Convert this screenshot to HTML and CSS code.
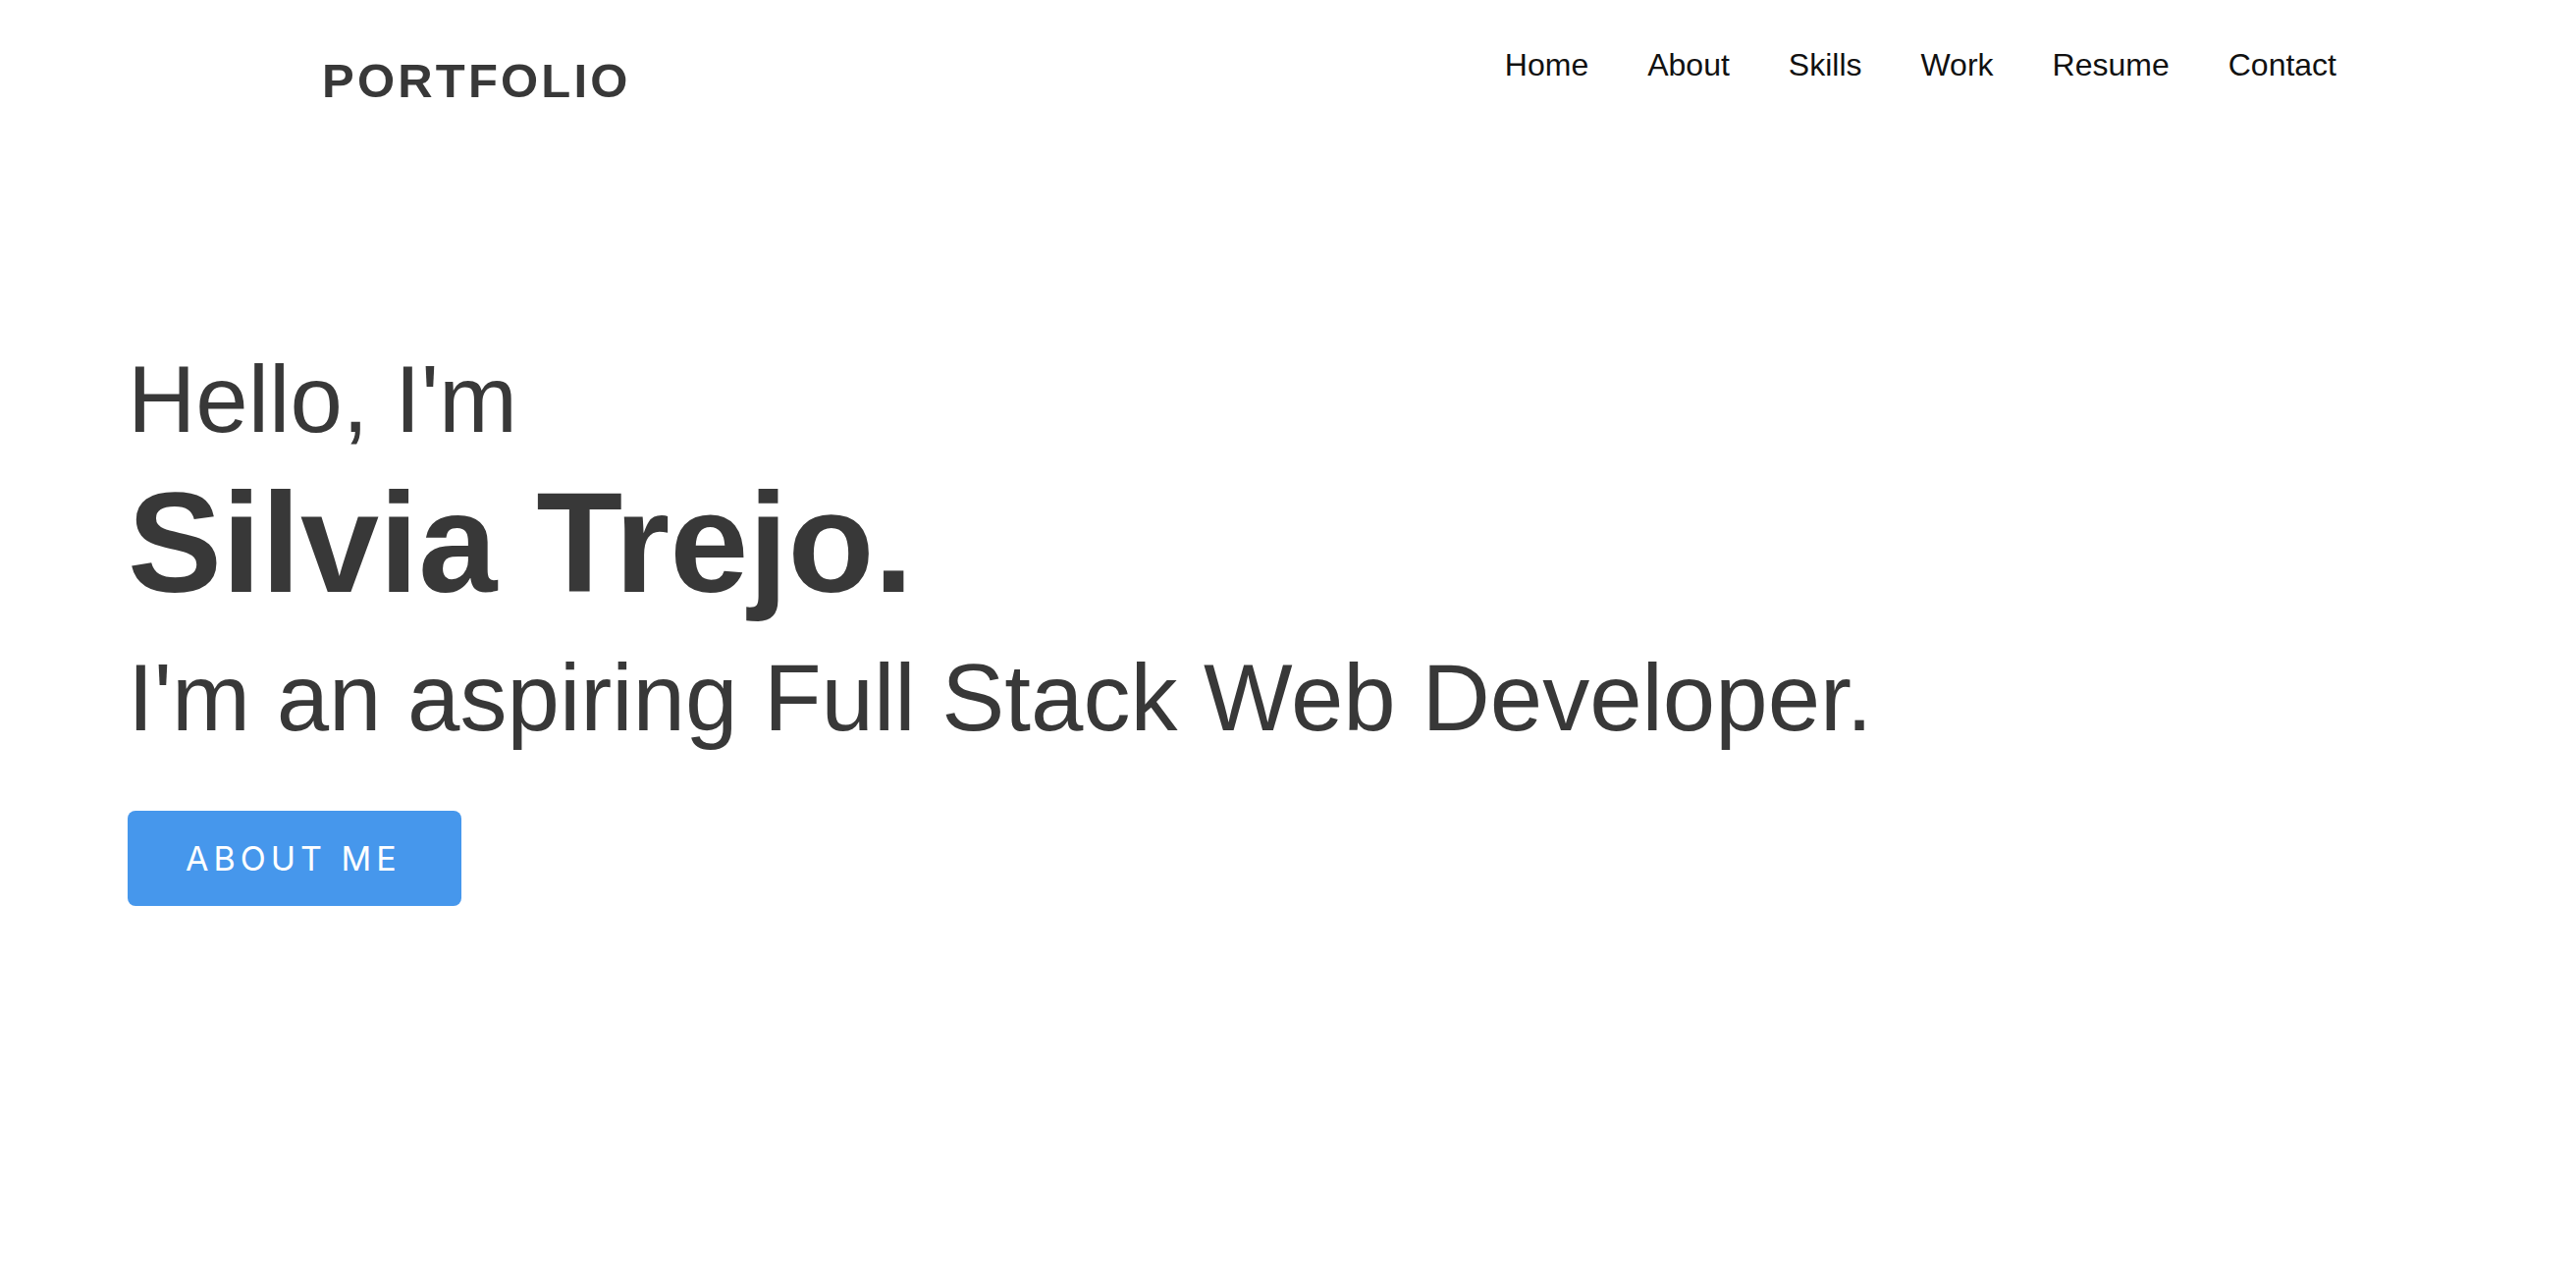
FILE: index.html
```html
<!DOCTYPE html>
<html lang="en">
<head>
<meta charset="utf-8">
<title>Portfolio</title>
<link rel="stylesheet" href="styles.css">
</head>
<body>
<header class="site-header">
  <a class="logo" href="#">PORTFOLIO</a>
  <nav class="nav">
    <a href="#">Home</a>
    <a href="#">About</a>
    <a href="#">Skills</a>
    <a href="#">Work</a>
    <a href="#">Resume</a>
    <a href="#">Contact</a>
  </nav>
</header>
<main class="hero">
  <h1 class="hero-title">
    <span class="hello">Hello, I'm</span>
    <span class="name">Silvia Trejo.</span>
  </h1>
  <p class="tagline">I'm an aspiring Full Stack Web Developer.</p>
  <a class="btn" href="#">ABOUT ME</a>
</main>
</body>
</html>
```

FILE: styles.css
```css
html, body {
  margin: 0;
  padding: 0;
  background: #ffffff;
}

body {
  font-family: "Liberation Sans", Arial, Helvetica, sans-serif;
  color: #383838;
}

a {
  text-decoration: none;
}

.site-header {
  display: flex;
  justify-content: space-between;
  align-items: flex-start;
  padding: 50px 244px 0 328px;
}

.logo {
  margin-top: 8px;
  font-size: 49px;
  line-height: 1;
  font-weight: 700;
  letter-spacing: 3.2px;
  color: #383838;
}

.nav {
  display: flex;
  gap: 60px;
}

.nav a {
  font-size: 32px;
  line-height: 1;
  color: #111111;
}

.hero {
  display: flex;
  flex-direction: column;
  align-items: flex-start;
  padding: 252px 0 0 130px;
}

.hero-title {
  margin: 0;
  display: flex;
  flex-direction: column;
  font-weight: 400;
}

.hello {
  font-size: 96px;
  line-height: 1;
}

.name {
  margin-top: 27px;
  font-size: 144px;
  line-height: 1;
  font-weight: 700;
}

.tagline {
  margin: 37px 0 0;
  font-size: 96px;
  line-height: 1;
}

.btn {
  margin-top: 67px;
  display: inline-block;
  padding: 32px 61px 32px 59px;
  line-height: 33px;
  font-family: Inter, "Open Sans", sans-serif;
  font-size: 34px;
  letter-spacing: 5px;
  color: #ffffff;
  background: #4697ec;
  border-radius: 8px;
}
```
